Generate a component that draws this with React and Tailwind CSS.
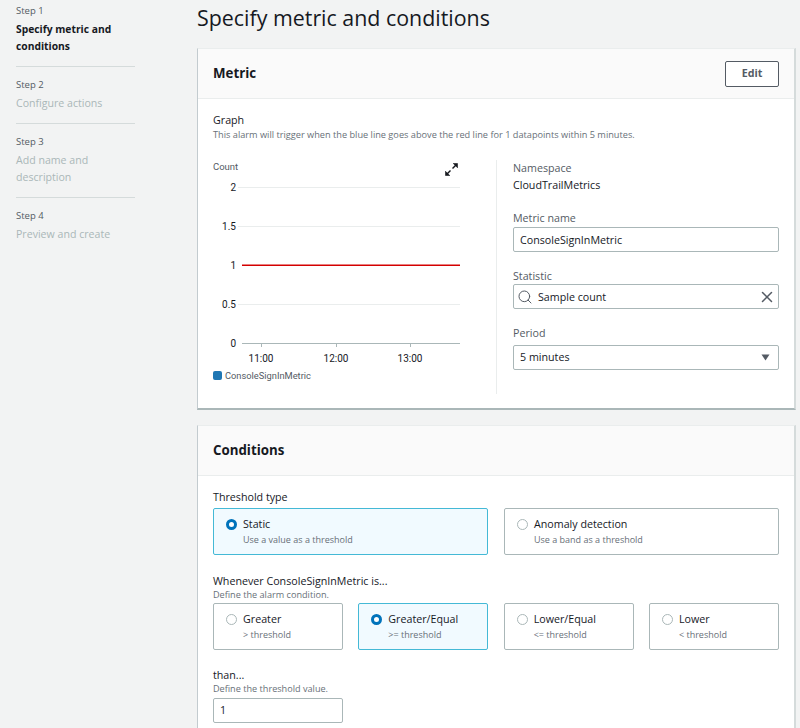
import React from 'react';
import { Search, X } from 'lucide-react';

const steps = [
  { step: 'Step 1', lines: ['Specify metric and', 'conditions'], active: true },
  { step: 'Step 2', lines: ['Configure actions'] },
  { step: 'Step 3', lines: ['Add name and', 'description'] },
  { step: 'Step 4', lines: ['Preview and create'] },
];

const Sidebar = () => (
  <aside className="w-[197px] shrink-0 pl-4 pr-[62px] pt-[2px]">
    {steps.map((s, i) => (
      <div key={s.step} className={i < 3 ? 'border-b border-[#d5dbdb] pb-[11px] mb-[9px]' : ''}>
        <div className="text-[9.5px] leading-[17px] text-[#545b64]">{s.step}</div>
        <div className={`mt-[2px] leading-[17px] ${s.active ? 'text-[10.3px] font-bold text-[#16191f]' : 'text-[10.6px] text-[#aab7b8]'}`}>
          {s.lines.map((l) => (
            <div key={l}>{l}</div>
          ))}
        </div>
      </div>
    ))}
  </aside>
);

const Card = ({ title, action, children, className }) => (
  <section className={`bg-white border-l border-l-[#c3cbcf] border-r-2 border-r-[#d5dbdb] border-t border-t-[#eaeded] ${className}`}>
    <div className="h-[50px] px-[15px] flex items-center justify-between bg-[#fafafa] border-b border-[#eaeded]">
      <h2 className="text-[13.3px] font-bold text-[#16191f]">{title}</h2>
      {action}
    </div>
    {children}
  </section>
);

const Chart = () => {
  const grid = [
    { label: '2', y: 27.5 },
    { label: '1.5', y: 66.5 },
    { label: '0.5', y: 144.5 },
  ];
  return (
    <svg width="250" height="235" viewBox="0 0 250 235" className="block" style={{ fontFamily: 'Roboto, sans-serif' }}>
      <text x="0" y="10" fontSize="9.5" fill="#545b64">Count</text>
      {/* expand icon */}
      <g stroke="#16191f" strokeWidth="1.4" fill="none">
        <path d="M233.5 14.5 L237.5 10.5" />
        <path d="M239.5 8.5 L243.5 4.5" />
        <path d="M240 3.5 H244.5 V8" fill="#16191f" strokeWidth="0.6" />
        <path d="M232.5 11 V15.5 H237" fill="#16191f" strokeWidth="0.6" />
      </g>
      {grid.map((g) => (
        <g key={g.label}>
          <line x1="25" x2="247" y1={g.y} y2={g.y} stroke="#eaeded" />
          <text x="23" y={g.y + 3.5} fontSize="10" textAnchor="end" fill="#16191f">{g.label}</text>
        </g>
      ))}
      <line x1="29" x2="247" y1="105.25" y2="105.25" stroke="#d40000" strokeWidth="1.5" />
      <text x="23" y="109" fontSize="10" textAnchor="end" fill="#16191f">1</text>
      <line x1="29" x2="247" y1="183.5" y2="183.5" stroke="#aab7b8" />
      <text x="23" y="187" fontSize="10" textAnchor="end" fill="#16191f">0</text>
      {[48, 123, 197].map((x, i) => (
        <g key={x}>
          <line x1={x + 0.5} x2={x + 0.5} y1="183" y2="187" stroke="#aab7b8" />
          <text x={x} y="202" fontSize="10" textAnchor="middle" fill="#16191f">{['11:00', '12:00', '13:00'][i]}</text>
        </g>
      ))}
      <rect x="0" y="211" width="9" height="9" rx="2" fill="#1f77b4" />
      <text x="12" y="219" fontSize="9.3" fill="#545b64">ConsoleSignInMetric</text>
    </svg>
  );
};

const Field = ({ label, className, gap, children }) => (
  <div className={className}>
    <div className={`text-[10.7px] leading-[14px] text-[#545b64] ${gap}`}>{label}</div>
    {children}
  </div>
);

const boxClass =
  'h-[25px] border border-[#aab7b8] rounded-[2px] px-[6px] flex items-center text-[10.7px] text-[#16191f] bg-white';

const Tile = ({ title, sub, checked }) => (
  <div
    className={`h-[47px] rounded-[2px] border flex pl-[12px] pt-[8px] ${
      checked ? 'border-[#44b9d6] bg-[#f1faff]' : 'border-[#aab7b8] bg-white'
    }`}
  >
    <span
      className={`mt-[2px] w-[11px] h-[11px] rounded-full shrink-0 bg-white ${
        checked ? 'border-[3px] border-[#0073bb]' : 'border border-[#aab7b8]'
      }`}
    />
    <div className="ml-[6px]">
      <div className="text-[10.7px] leading-[15px] text-[#16191f]">{title}</div>
      <div className="mt-[1px] text-[9px] leading-[14px] text-[#687078]">{sub}</div>
    </div>
  </div>
);

const App = () => (
  <div className="w-[800px] h-[728px] overflow-hidden flex bg-[#f2f3f3]" style={{ fontFamily: '"Open Sans", sans-serif' }}>
    <Sidebar />
    <main className="flex-1 mr-[4px]">
      <h1 className="h-[48px] pt-[2px] text-[21.4px] leading-[32px] text-[#16191f]">Specify metric and conditions</h1>

      <Card
        title="Metric"
        className="h-[362px] border-b-2 border-b-[#aab7b8]"
        action={
          <button className="w-[54px] h-[26px] border border-[#545b64] rounded-[2px] bg-white text-[10.7px] font-bold text-[#545b64]">
            Edit
          </button>
        }
      >
        <div className="px-[15px] pt-[14px]">
          <div className="text-[10.7px] leading-[14px] text-[#16191f]">Graph</div>
          <div className="mt-[1px] text-[9.2px] leading-[14px] text-[#687078]">
            This alarm will trigger when the blue line goes above the red line for 1 datapoints within 5 minutes.
          </div>
          <div className="flex mt-[18px]">
            <div className="w-[284px] h-[234px] border-r border-[#eaeded]">
              <Chart />
            </div>
            <div className="flex-1 pl-[16px] pt-[1px]">
              <div className="text-[10.7px] leading-[14px] text-[#545b64]">Namespace</div>
              <div className="text-[10.7px] leading-[14px] mt-[3px] text-[#16191f]">CloudTrailMetrics</div>
              <Field label="Metric name" className="mt-[19px]" gap="mb-[2px]">
                <div className={boxClass}>
                  <span className="mt-[1px]">ConsoleSignInMetric</span>
                </div>
              </Field>
              <Field label="Statistic" className="mt-[17px]" gap="mb-[1px]">
                <div className={boxClass}>
                  <Search size={16} strokeWidth={1.5} className="text-[#545b64] -ml-[3px] mt-[1px]" />
                  <span className="ml-[5px] flex-1 mt-[2px]">Sample count</span>
                  <X size={18} strokeWidth={2} className="text-[#545b64] -mr-[4px]" />
                </div>
              </Field>
              <Field label="Period" className="mt-[17px]" gap="mb-[5px]">
                <div className={boxClass}>
                  <span className="flex-1">5 minutes</span>
                  <svg width="9" height="7" viewBox="0 0 9 7" className="mr-[2px]">
                    <path d="M0.5 0.5 H8.5 L4.5 6.5 Z" fill="#545b64" />
                  </svg>
                </div>
              </Field>
            </div>
          </div>
        </div>
      </Card>

      <Card title="Conditions" className="mt-[15px] h-[320px]">
        <div className="px-[15px] pt-[14px]">
          <div className="text-[10.7px] leading-[14px] text-[#16191f] mb-[4px]">Threshold type</div>
          <div className="grid grid-cols-2 gap-[16px]">
            <Tile checked title="Static" sub="Use a value as a threshold" />
            <Tile title="Anomaly detection" sub="Use a band as a threshold" />
          </div>
          <div className="mt-[19px] text-[10.7px] leading-[14px] text-[#16191f]">Whenever ConsoleSignInMetric is...</div>
          <div className="text-[9.15px] leading-[14px] text-[#687078] mb-[1px]">Define the alarm condition.</div>
          <div className="grid grid-cols-4 gap-[15.33px]">
            <Tile title="Greater" sub="> threshold" />
            <Tile checked title="Greater/Equal" sub=">= threshold" />
            <Tile title="Lower/Equal" sub="<= threshold" />
            <Tile title="Lower" sub="< threshold" />
          </div>
          <div className="mt-[18px] text-[10.7px] leading-[14px] text-[#16191f]">than...</div>
          <div className="text-[9.15px] leading-[14px] text-[#687078] mb-[2px]">Define the threshold value.</div>
          <div className={`${boxClass} w-[130px]`}>1</div>
        </div>
      </Card>
    </main>
  </div>
);

export default App;
